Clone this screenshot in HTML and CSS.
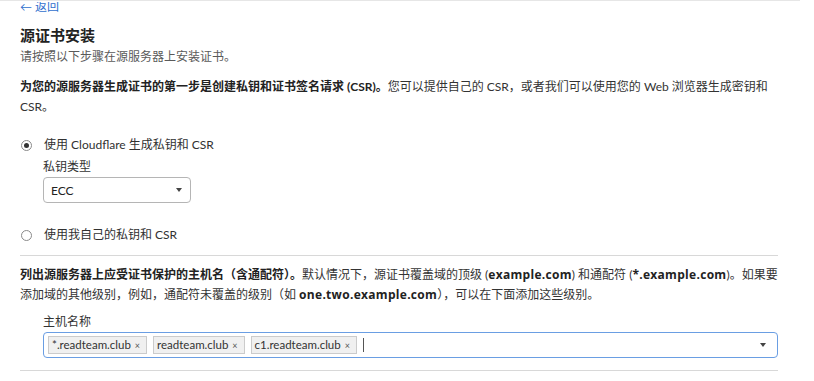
FILE: index.html
```html
<!DOCTYPE html>
<html lang="zh-CN">
<head>
    <meta charset="UTF-8">
    <meta name="viewport" content="width=device-width, initial-scale=1.0">
    <title>源证书安装</title>
    <link rel="stylesheet" href="styles.css">
</head>
<body>
    <div class="topbar"></div>
    <main class="page">
        <div class="back">
            <a class="back__link" href="#">&larr; 返回</a>
        </div>

        <h1 class="title">源证书安装</h1>
        <p class="subtitle">请按照以下步骤在源服务器上安装证书。</p>

        <p class="para intro">
            <strong>为您的源服务器生成证书的第一步是创建私钥和证书签名请求 (CSR)。</strong>您可以提供自己的 CSR，或者我们可以使用您的 Web 浏览器生成密钥和 CSR。
        </p>

        <div class="options">
            <label class="radio">
                <span class="radio__dot radio__dot--on"></span>
                <span>使用 Cloudflare 生成私钥和 CSR</span>
            </label>
            <div class="field">
                <div class="field__label">私钥类型</div>
                <div class="select">
                    <span>ECC</span>
                    <span class="caret"></span>
                </div>
            </div>
            <label class="radio radio--second">
                <span class="radio__dot"></span>
                <span>使用我自己的私钥和 CSR</span>
            </label>
        </div>

        <hr class="divider">

        <p class="para hosts">
            <strong>列出源服务器上应受证书保护的主机名（含通配符）。</strong>默认情况下，源证书覆盖域的顶级 (<strong class="domain">example.com</strong>) 和通配符 (<strong class="domain">*.example.com</strong>)。如果要添加域的其他级别，例如，通配符未覆盖的级别（如 <strong class="domain">one.two.example.com</strong>），可以在下面添加这些级别。
        </p>

        <div class="field field--hosts">
            <div class="field__label">主机名称</div>
            <div class="tags">
                <span class="tag">*.readteam.club <span class="tag__x">×</span></span>
                <span class="tag">readteam.club <span class="tag__x">×</span></span>
                <span class="tag">c1.readteam.club <span class="tag__x">×</span></span>
                <span class="cursor"></span>
                <span class="caret caret--right"></span>
            </div>
        </div>

        <hr class="divider divider--last">
    </main>
</body>
</html>
```

FILE: styles.css
```css
* {
  box-sizing: border-box;
  margin: 0;
  padding: 0;
}

body {
  font-family: Lato, "Noto Sans CJK SC", sans-serif;
  font-size: 12px;
  color: #313131;
  background: #fff;
  overflow: hidden;
}

.topbar {
  width: 800px;
  height: 2px;
  border-top: 1px solid #e6e6e6;
}

.page {
  width: 758px;
  margin-left: 20px;
}

.back {
  height: 10px;
  overflow: hidden;
}

.back__link {
  display: block;
  margin-top: -3px;
  color: #2f6fce;
  text-decoration: none;
  font-size: 12px;
  line-height: 16px;
}

.title {
  margin-top: 13px;
  font-size: 15px;
  line-height: 20px;
  font-weight: 700;
  color: #222;
}

.subtitle {
  margin-top: 3px;
  line-height: 18px;
  color: #5a5a5a;
}

.para {
  line-height: 20px;
  color: #333;
}

.para strong {
  font-weight: 700;
  color: #222;
}

.para .domain {
  font-family: "Open Sans", "Noto Sans CJK SC", sans-serif;
  letter-spacing: 0.3px;
}

.intro {
  margin-top: 11px;
}

.options {
  margin-top: 18px;
}

.radio {
  display: flex;
  align-items: center;
  gap: 12px;
  line-height: 20px;
  padding-left: 1px;
}

.radio--second {
  margin-top: 22px;
}

.radio__dot {
  width: 11px;
  height: 11px;
  border: 1px solid #8a8a8a;
  border-radius: 50%;
  display: flex;
  align-items: center;
  justify-content: center;
}

.radio__dot--on::after {
  content: "";
  width: 5px;
  height: 5px;
  border-radius: 50%;
  background: #333;
}

.field {
  padding-left: 23px;
  margin-top: 3px;
}

.field__label {
  line-height: 18px;
  color: #333;
}

.select {
  width: 148px;
  height: 26px;
  margin-top: 1px;
  border: 1px solid #b5b5b5;
  border-radius: 4px;
  display: flex;
  align-items: center;
  justify-content: space-between;
  padding: 0 8px 0 7px;
  color: #222;
}

.caret {
  width: 0;
  height: 0;
  border-left: 3.5px solid transparent;
  border-right: 3.5px solid transparent;
  border-top: 4px solid #444;
}

.caret--right {
  margin-left: auto;
  margin-right: 1px;
}

.divider {
  border: none;
  border-top: 1px solid #d8d8d8;
  margin-top: 10px;
}

.hosts {
  margin-top: 9px;
}

.field--hosts {
  margin-top: 8px;
}

.tags {
  height: 26px;
  margin-top: 1px;
  border: 1px solid #6a9ee3;
  border-radius: 4px;
  display: flex;
  align-items: center;
  gap: 6px;
  padding: 0 10px 0 4px;
}

.tag {
  height: 18px;
  line-height: 16px;
  padding: 0 6px 0 3px;
  background: #f0f0f0;
  border: 1px solid #cbcbcb;
  color: #333;
  font-size: 11.5px;
  white-space: nowrap;
}

.tag__x {
  font-size: 9px;
  margin-left: 1px;
  color: #555;
}

.cursor {
  width: 1px;
  height: 14px;
  background: #555;
}

.divider--last {
  margin-top: 12px;
}
```
